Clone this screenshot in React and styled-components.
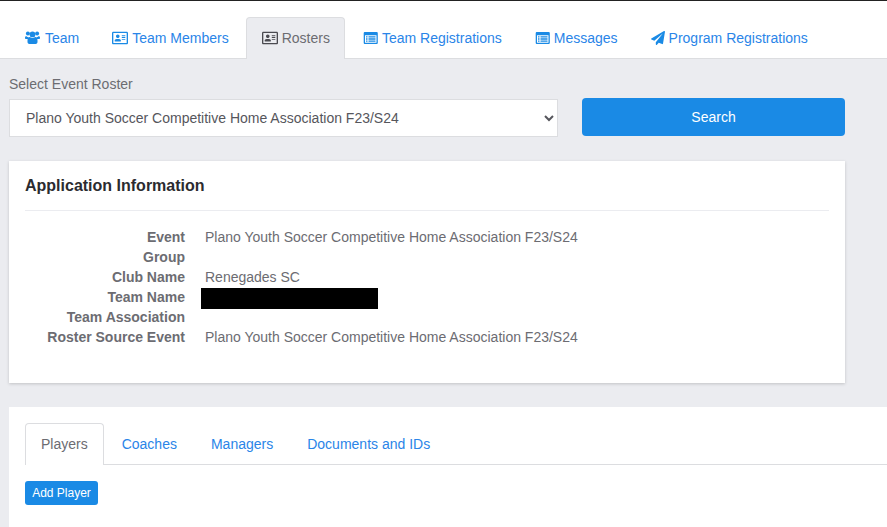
import React from 'react';
import styled, {createGlobalStyle} from 'styled-components';
import {FaRegAddressCard, FaPaperPlane} from 'react-icons/fa';

const GlobalStyle = createGlobalStyle`
  html, body {
    margin: 0;
    padding: 0;
    height: 100%;
    overflow: hidden;
    background: #ebecf0;
  }
  body {
    font-family: "Liberation Sans", Arial, sans-serif;
    font-size: 14px;
    color: #6c6c72;
  }
  * {
    box-sizing: border-box;
  }
`

const UsersIcon = () => (
  <svg width="16" height="14" viewBox="0 0 16 14" fill="currentColor">
    <circle cx="2.9" cy="2.6" r="2"/>
    <circle cx="12.1" cy="2.6" r="2"/>
    <circle cx="7.5" cy="3.4" r="2.9"/>
    <path d="M0 6.8C0 5.6.6 5.2 1.5 5.2c.6.6 1.3.9 2.2.9-.3.5-.5 1.2-.5 2H.9C.3 8.1 0 7.6 0 6.8zM15 6.8c0-1.2-.6-1.6-1.5-1.6-.6.6-1.3.9-2.2.9.3.5.5 1.2.5 2h2.3c.6 0 .9-.5.9-1.3z"/>
    <path d="M4.9 5.9c.7.6 1.6 1 2.6 1s1.9-.4 2.6-1c1.6 0 2.4 1.3 2.4 3.6v1.6c0 1.2-.8 1.9-1.9 1.9H4.4c-1.1 0-1.9-.7-1.9-1.9V9.5c0-2.300.8-3.600 2.400-3.600z"/>
  </svg>
)

const ListIcon = () => (
  <svg width="15" height="14" viewBox="0 0 15 14" fill="currentColor">
    <path
      fillRule="evenodd"
      d="M2 1h11.500c.8 0 1.300.5 1.300 1.300v9.400c0 .8-.5 1.300-1.300 1.300H2c-.8 0-1.300-.5-1.300-1.300V2.300C.7 1.500 1.200 1 2 1zM2 4.200v7.500h11.500V4.200z"
    />
    <path d="M3 5.200h1.500v1.400H3zM5.500 5.200H12.500v1.400H5.500zM3 7.300h1.500v1.400H3zM5.500 7.300H12.500v1.400H5.500zM3 9.400h1.500v1.400H3zM5.500 9.400H12.500v1.400H5.500z"/>
  </svg>
)

const NAV_TABS = [
  {label: 'Team', icon: <UsersIcon/>},
  {label: 'Team Members', icon: <FaRegAddressCard size={16}/>},
  {label: 'Rosters', icon: <FaRegAddressCard size={16}/>, active: true},
  {label: 'Team Registrations', icon: <ListIcon/>},
  {label: 'Messages', icon: <ListIcon/>},
  {label: 'Program Registrations', icon: <FaPaperPlane/>},
]

const INFO_ROWS = [
  {label: 'Event', value: 'Plano Youth Soccer Competitive Home Association F23/S24'},
  {label: 'Group'},
  {label: 'Club Name', value: 'Renegades SC'},
  {label: 'Team Name', redacted: true},
  {label: 'Team Association'},
  {label: 'Roster Source Event', value: 'Plano Youth Soccer Competitive Home Association F23/S24'},
]

const App = () => {
  return (
    <>
      <GlobalStyle/>
      <Page>
        <Nav>
          {NAV_TABS.map(tab => (
            <NavTab key={tab.label} $active={tab.active}>
              {tab.icon}
              {tab.label}
            </NavTab>
          ))}
        </Nav>
        <Content>
          <SearchRow>
            <SelectField>
              <FieldLabel>Select Event Roster</FieldLabel>
              <RosterSelect defaultValue="f23">
                <option value="f23">Plano Youth Soccer Competitive Home Association F23/S24</option>
              </RosterSelect>
            </SelectField>
            <SearchButton>Search</SearchButton>
          </SearchRow>
          <InfoCard>
            <CardTitle>Application Information</CardTitle>
            <InfoGrid>
              {INFO_ROWS.map(row => (
                <React.Fragment key={row.label}>
                  <InfoLabel>{row.label}</InfoLabel>
                  <InfoValue>{row.redacted ? <Redacted/> : row.value}</InfoValue>
                </React.Fragment>
              ))}
            </InfoGrid>
          </InfoCard>
          <RosterCard>
            <SubTabs>
              <SubTab $active>Players</SubTab>
              <SubTab>Coaches</SubTab>
              <SubTab>Managers</SubTab>
              <SubTab>Documents and IDs</SubTab>
            </SubTabs>
            <AddButton>Add Player</AddButton>
          </RosterCard>
        </Content>
      </Page>
    </>
  );
};

const Page = styled.div`
  width: 887px;
  height: 527px;
  overflow: hidden;
  border-top: 1px solid #222;
`
const Nav = styled.nav`
  display: flex;
  align-items: flex-end;
  gap: 2px;
  height: 58px;
  padding-left: 9.5px;
  background: #fff;
  border-bottom: 1px solid #dcdde0;
`
const NavTab = styled.a`
  display: flex;
  align-items: center;
  gap: 4px;
  height: 42px;
  margin-bottom: -1px;
  padding: 0 14.5px 2px;
  border: 1px solid ${p => (p.$active ? '#dcdde0' : 'transparent')};
  border-bottom: 0;
  border-radius: 4px 4px 0 0;
  background: ${p => (p.$active ? '#ebecf0' : 'transparent')};
  color: ${p => (p.$active ? '#6c6c72' : '#2a85e8')};
  white-space: nowrap;

  svg {
    flex-shrink: 0;
    color: ${p => (p.$active ? '#4a4a50' : '#1a8ae5')};
  }
`
const Content = styled.main`
  display: flex;
  flex-direction: column;
  padding: 17px 0 0 9px;
`
const SearchRow = styled.div`
  display: flex;
  align-items: flex-end;
  gap: 24px;
  width: 836px;
`
const SelectField = styled.label`
  display: flex;
  flex-direction: column;
  gap: 6px;
  width: 549px;
`
const FieldLabel = styled.span`
  line-height: 17px;
`
const RosterSelect = styled.select`
  height: 38px;
  padding: 0 12px;
  border: 1px solid #dcdde0;
  border-radius: 0;
  background: #fff;
  color: #56565c;
  font: inherit;
`
const SearchButton = styled.button`
  flex: 1;
  height: 38px;
  margin-bottom: 1px;
  border: 0;
  border-radius: 4px;
  background: #1a8ae5;
  color: #fff;
  font: inherit;
`
const InfoCard = styled.section`
  width: 836px;
  height: 222px;
  margin-top: 24px;
  padding: 0 16px;
  background: #fff;
  box-shadow: 0 1px 3px rgba(0, 0, 0, 0.18);
`
const CardTitle = styled.h2`
  margin: 0;
  height: 50px;
  border-bottom: 1px solid #ebecf0;
  color: #2b2b2f;
  font-size: 16px;
  font-weight: 700;
  line-height: 49px;
`
const InfoGrid = styled.dl`
  display: grid;
  grid-template-columns: 160px 1fr;
  grid-auto-rows: 20px;
  column-gap: 20px;
  margin: 16px 0 0;
  line-height: 20px;
`
const InfoLabel = styled.dt`
  font-weight: 700;
  text-align: right;
`
const InfoValue = styled.dd`
  margin: 0;
`
const Redacted = styled.span`
  display: block;
  width: 177px;
  height: 21px;
  margin: 1px 0 0 -4px;
  background: #000;
`
const RosterCard = styled.section`
  width: 878px;
  height: 120px;
  margin-top: 24px;
  padding: 16px 0 0 16px;
  background: #fff;
`
const SubTabs = styled.div`
  display: flex;
  gap: 2px;
  height: 42px;
  border-bottom: 1px solid #dcdde0;
`
const SubTab = styled.a`
  height: 42px;
  padding: 0 15px;
  border: 1px solid ${p => (p.$active ? '#dcdde0' : 'transparent')};
  border-bottom: 0;
  border-radius: 4px 4px 0 0;
  background: ${p => (p.$active ? '#fff' : 'transparent')};
  color: ${p => (p.$active ? '#6c6c72' : '#2a85e8')};
  line-height: 41px;
`
const AddButton = styled.button`
  display: block;
  width: 73px;
  height: 24px;
  margin-top: 16px;
  padding: 0;
  border: 0;
  border-radius: 3px;
  background: #1a8ae5;
  color: #fff;
  font: 400 12px "Liberation Sans", Arial, sans-serif;
`

export default App;
